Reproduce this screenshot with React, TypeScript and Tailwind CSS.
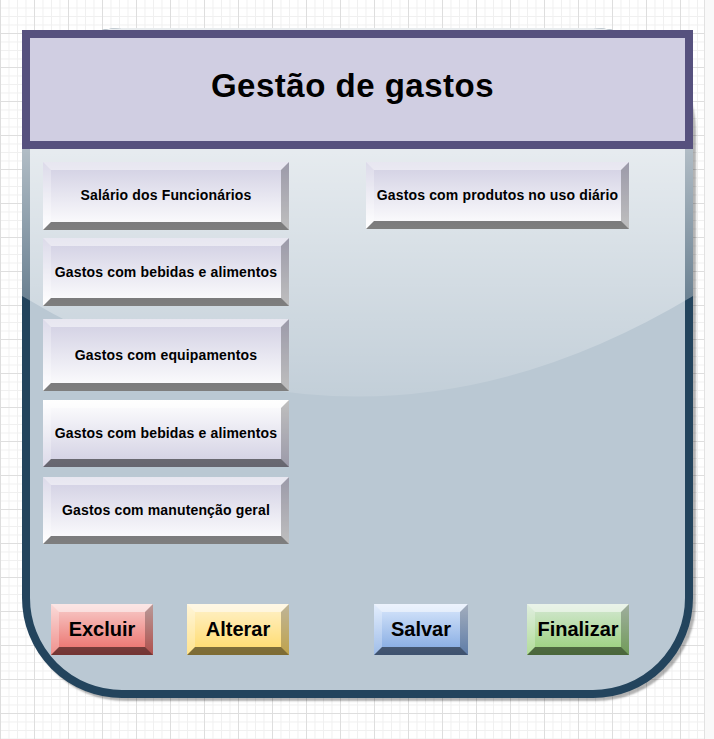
import React from 'react';

const bevel =
    "flex items-center justify-center border-[8px] border-t-white/50 border-l-white/25 border-r-black/25 border-b-black/50 bg-origin-border font-bold text-black whitespace-nowrap";

const Glass = () => (
    <svg
        className="pointer-events-none absolute left-[-8px] top-[-8px]"
        width={671}
        height={670}
        viewBox="0 0 671 670"
    >
        <defs>
            <linearGradient id="glassFill" x1="0" y1="0" x2="0" y2="380" gradientUnits="userSpaceOnUse">
                <stop offset="0" stopColor="#ffffff" stopOpacity="0.9" />
                <stop offset="1" stopColor="#ffffff" stopOpacity="0.1" />
            </linearGradient>
            <clipPath id="glassClip">
                <rect width="671" height="670" rx="100" ry="100" />
            </clipPath>
        </defs>
        <path d="M0 0H671V268Q335.5 469 0 268Z" fill="url(#glassFill)" clipPath="url(#glassClip)" />
    </svg>
);

const App = () => {
    return (
        <div className="flex h-[739px] w-[714px] overflow-hidden bg-white font-['Liberation_Sans',Arial,sans-serif]">
            {/* canvas with grid */}
            <div className="h-full w-[704px] bg-[linear-gradient(to_right,#dedede_1px,transparent_1px),linear-gradient(to_bottom,#dedede_1px,transparent_1px),linear-gradient(to_right,#f0f0f0_1px,transparent_1px),linear-gradient(to_bottom,#f0f0f0_1px,transparent_1px)] bg-size-[34px_34px,34px_34px,8.5px_8.5px,8.5px_8.5px] bg-position-[0_-1px]">
                {/* main panel */}
                <div className="relative ml-[22px] mt-[28px] h-[670px] w-[671px] rounded-[100px] border-[8px] border-[#23445d] bg-[#bac8d3] shadow-[3px_3px_2px_rgba(0,0,0,0.3)]">
                    <Glass />

                    {/* title */}
                    <div className="relative z-10 -mx-[8px] -mt-[6px] flex h-[119px] items-center justify-center border-[8px] border-[#56517e] bg-[#d0cee2] pb-[7px] pr-[10px]">
                        <h1 className="text-[33px] font-bold tracking-[0.5px] text-black">Gestão de gastos</h1>
                    </div>

                    {/* categories */}
                    <div className="relative z-10 flex pl-[13px] pt-[13px] tracking-[0.15px]">
                        <div className="flex w-[246px] flex-col text-[14px]">
                            <div className={`${bevel} h-[68px] pb-[2px] bg-[linear-gradient(to_bottom,#d0cee2,#ffffff)]`}>Salário dos Funcionários</div>
                            <div className={`${bevel} mt-[8px] h-[68px] bg-[linear-gradient(to_bottom,#d0cee2,#ffffff)]`}>Gastos com bebidas e alimentos</div>
                            <div className={`${bevel} mt-[13px] h-[72px] bg-[linear-gradient(to_bottom,#d0cee2,#ffffff)]`}>Gastos com equipamentos</div>
                            <div className={`${bevel} mt-[9px] h-[67px] bg-[linear-gradient(to_bottom,#ffffff,#d0cee2)]`}>Gastos com bebidas e alimentos</div>
                            <div className={`${bevel} mt-[10px] h-[67px] bg-[linear-gradient(to_bottom,#d0cee2,#ffffff)]`}>Gastos com manutenção geral</div>
                        </div>
                        <div className={`${bevel} ml-[77px] h-[67px] w-[263px] text-[14px] bg-[linear-gradient(to_bottom,#d0cee2,#ffffff)]`}>
                            Gastos com produtos no uso diário
                        </div>
                    </div>

                    {/* actions */}
                    <div className="relative z-10 mt-[60px] flex pl-[21px] text-[20px]">
                        <button className={`${bevel} h-[51px] w-[102px] pb-[2px] bg-[linear-gradient(to_bottom,#f8cecc,#ea6b66)]`}>Excluir</button>
                        <button className={`${bevel} ml-[34px] h-[51px] w-[102px] pb-[2px] bg-[linear-gradient(to_bottom,#fff2cc,#ffd966)]`}>Alterar</button>
                        <button className={`${bevel} ml-[85px] h-[51px] w-[94px] pb-[2px] bg-[linear-gradient(to_bottom,#dae8fc,#7ea6e0)]`}>Salvar</button>
                        <button className={`${bevel} ml-[59px] h-[51px] w-[102px] pb-[2px] bg-[linear-gradient(to_bottom,#d5e8d4,#97d077)]`}>Finalizar</button>
                    </div>
                </div>
            </div>
            {/* right edge strip */}
            <div className="h-full w-[10px] border-l border-[#e2e2e2] bg-[#f9f9f9]" />
        </div>
    );
};

export default App;
